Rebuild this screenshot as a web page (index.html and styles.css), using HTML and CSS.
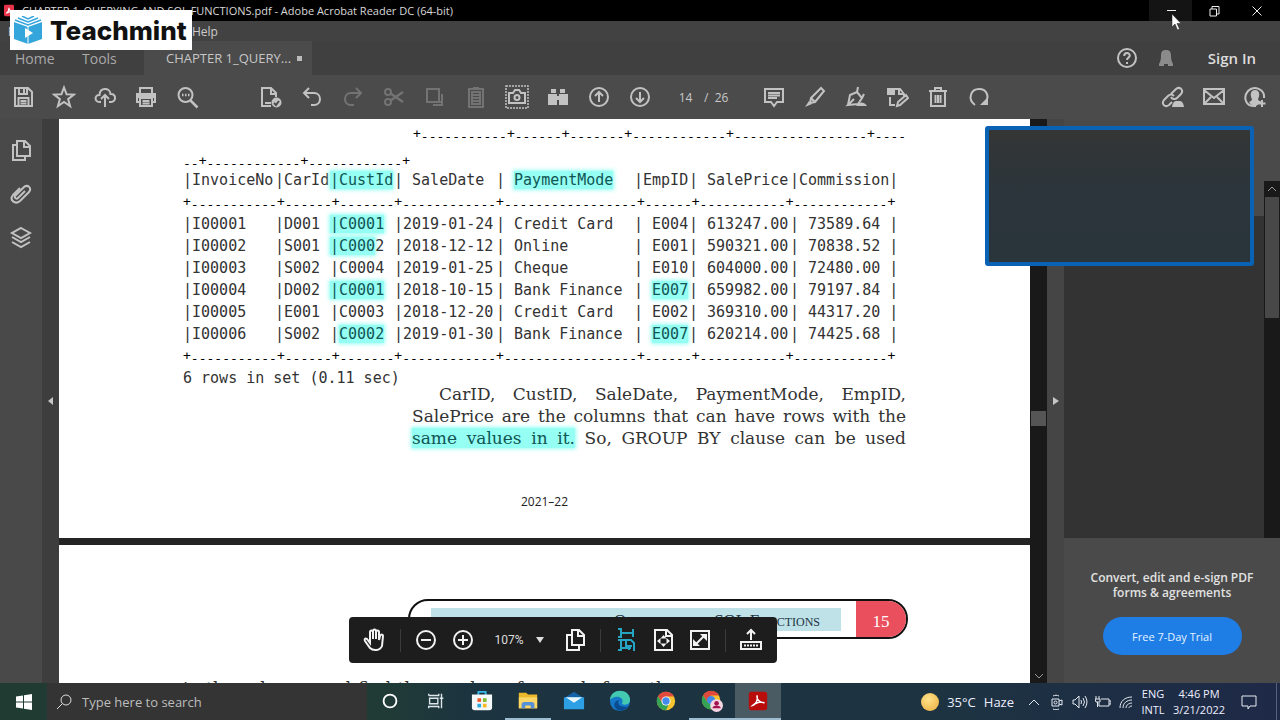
FILE: index.html
```html
<!DOCTYPE html>
<html lang="en">
<head>
<meta charset="utf-8">
<title>CHAPTER 1_QUERYING AND SQL FUNCTIONS.pdf - Adobe Acrobat Reader DC (64-bit)</title>
<link rel="stylesheet" href="styles.css">
</head>
<body>
<div class="screen">
  <header class="titlebar">
    <svg class="app-icon" viewBox="0 0 14 16"><rect width="14" height="16" rx="2" fill="#e8344a"/><path d="M3 12c3-2 4-5 4-8 0 3 2 5 5 6-3-1-6 0-9 2" fill="none" stroke="#fff" stroke-width="1.5"/></svg>
    <span class="title">CHAPTER 1_QUERYING AND SQL FUNCTIONS.pdf - Adobe Acrobat Reader DC (64-bit)</span>
    <div class="window-buttons">
      <button class="win active" aria-label="Minimize"><svg viewBox="0 0 12 12"><path d="M2 5.500h9"/></svg></button>
      <button class="win" aria-label="Restore"><svg viewBox="0 0 12 12"><path d="M2 4h6.500v7H2zM4 4V1.500h7V9H8.500"/></svg></button>
      <button class="win" aria-label="Close"><svg viewBox="0 0 12 12"><path d="M1.500 1.500l9 9M10.500 1.500l-9 9"/></svg></button>
    </div>
  </header>
  <nav class="menubar"><a href="#">File</a><a href="#">Help</a></nav>
  <nav class="tabs">
    <a href="#" class="tab home">Home</a>
    <a href="#" class="tab tools">Tools</a>
    <a href="#" class="tab doc">CHAPTER 1_QUERY...<i class="dot"></i></a>
    <div class="account">
      <button class="icon" aria-label="Help"><svg viewBox="0 0 24 24"><circle cx="12" cy="12" r="9"/><path d="M9.200 10c0-4 5.600-3.600 5.600-.5 0 2-2.800 2-2.800 4.500M12 16v2"/></svg></button>
      <button class="icon dim" aria-label="Notifications"><svg viewBox="0 0 24 24"><path class="solid" d="M12 4c-4 0-5 2-5 6 0 4-1 6-2 8h14c-1-2-2-4-2-8 0-4-1-6-5-6zM5 18h5v2H5zM14 18h5v2h-5z"/></svg></button>
      <button class="signin">Sign In</button>
    </div>
  </nav>
  <div class="toolbar">
    <div class="group">
      <button class="icon" aria-label="Save"><svg viewBox="0 0 24 24"><path d="M4 3h13l4 4v14H4zM8 3v6h8V3M13 4v4M7.500 21v-8h10v8M9.500 16h6M9.500 18.500h6"/></svg></button>
      <button class="icon" aria-label="Star"><svg viewBox="0 0 24 24"><path d="M12 2.500l2.600 6.800 7.200.3-5.700 4.500 2 7L12 17l-6.100 4.100 2-7L2.200 9.600l7.200-.3z"/></svg></button>
      <button class="icon" aria-label="Upload"><svg viewBox="0 0 24 24"><path d="M8 17H6.500C1 17 1.500 9.500 6.500 10 7 2 17 2.500 17.500 9c6-.5 6 8 .5 8h-2M12 22V10M8 14l4-4 4 4"/></svg></button>
      <button class="icon" aria-label="Print"><svg viewBox="0 0 24 24"><path d="M6 8V3h12v5M6 17H3V9h18v8h-3M6 13h12v8H6zM8.500 16h7M8.500 18.500h7"/><path class="solid" d="M3 8h18v5H3z"/></svg></button>
      <button class="icon" aria-label="Find"><svg viewBox="0 0 24 24"><circle cx="10.500" cy="10" r="7"/><path d="M15.500 15.500l7 7M7 10h1.500M10 10h1.500M13 10h1.500" stroke-width="2.500"/></svg></button>
    </div>
    <div class="group second">
      <button class="icon" aria-label="Document"><svg viewBox="0 0 24 24"><path d="M12 21H3V3h9l5 5v4M12 3v6h5M6 18h6"/><circle class="solid" cx="17.500" cy="17.500" r="5"/><path d="M15 18l2 2 3-4" stroke="#4b4b4b"/></svg></button>
      <button class="icon" aria-label="Undo"><svg viewBox="0 0 24 24"><path d="M5 8h9c8 0 8 12 0 12h-3M9 3L4 8l5 5"/></svg></button>
      <button class="icon faint" aria-label="Redo"><svg viewBox="0 0 24 24"><path d="M19 8h-9c-8 0-8 12 0 12h3M15 3l5 5-5 5"/></svg></button>
      <button class="icon faint" aria-label="Cut"><svg viewBox="0 0 24 24"><circle cx="6" cy="7" r="3"/><circle cx="6" cy="17" r="3"/><path d="M8.500 8.500L21 17M8.500 15.500L21 7" stroke-width="2.500"/></svg></button>
      <button class="icon faint" aria-label="Copy"><svg viewBox="0 0 24 24"><path d="M4 4h12v13H4zM19 9v11h-9M13 17h5"/></svg></button>
      <button class="icon faint" aria-label="Paste"><svg viewBox="0 0 24 24"><path d="M5 4h14v18H5zM8 7h8v12H8zM9 10h6M9 13h6M9 16h6M9 3h6"/></svg></button>
      <button class="icon" aria-label="Snapshot"><svg viewBox="0 0 24 24"><path d="M1 1h22v22H1z" stroke-dasharray="2 1" stroke-width="1.500"/><path d="M4 18V8h4l2-3h4l2 3h4v10z"/><circle cx="12" cy="12.500" r="2.500"/></svg></button>
      <button class="icon" aria-label="Search"><svg viewBox="0 0 24 24"><path class="solid" d="M2 9h9v11H2zM13 9h9v11h-9zM5 4h5v4H5zM14 4h5v4h-5zM11 11h2v4h-2z"/></svg></button>
      <button class="icon" aria-label="Previous page"><svg viewBox="0 0 24 24"><circle cx="12" cy="12" r="9"/><path d="M12 17V7M8 11l4-4 4 4"/></svg></button>
      <button class="icon" aria-label="Next page"><svg viewBox="0 0 24 24"><circle cx="12" cy="12" r="9"/><path d="M12 7v10M8 13l4 4 4-4"/></svg></button>
    </div>
    <div class="pages"><input type="text" value="14" aria-label="Page number"><span>/&nbsp; 26</span></div>
    <div class="group">
      <button class="icon" aria-label="Comment"><svg viewBox="0 0 24 24"><path d="M3 4h18v13h-6l-3 4-3-4H3zM6 8h12M6 10.500h12M6 13h9"/></svg></button>
      <button class="icon" aria-label="Highlight"><svg viewBox="0 0 24 24"><path d="M18 3l3 3-9 11-5 1 1-5zM8 13l4 4"/><path class="solid" d="M6 16l3 3-7 3z"/></svg></button>
      <button class="icon" aria-label="Sign"><svg viewBox="0 0 24 24"><path d="M4 20l2-10 7-3 5 6-4 6-10 1 6-6M13 7l1-5M18 13l2-4"/><path class="solid" d="M12 21c3-4 7-5 11 0z"/></svg></button>
      <button class="icon" aria-label="Edit"><svg viewBox="0 0 24 24"><path d="M10 4h5l4 5v2M5 12v8h5M14 4v5h5M12 21l1-4 8-7 2 3-8 7z"/><path class="solid" d="M2 3h8v7H2z"/></svg></button>
      <button class="icon" aria-label="Delete"><svg viewBox="0 0 24 24"><path d="M3 6h18M9 6V3h6v3M5 6v15h14V6M9.500 10v8M12 10v8M14.500 10v8"/></svg></button>
      <button class="icon" aria-label="Rotate"><svg viewBox="0 0 24 24"><path d="M8 20C0 14 4 4 12 4c8 0 11 8 6 14"/><path class="solid" d="M21 12v8h-8z"/></svg></button>
    </div>
    <div class="group share">
      <button class="icon" aria-label="Share link"><svg viewBox="0 0 24 24"><path d="M10 9l5-5c4-3 8 1 5 5l-4 4c-2 2-5 1-6-1M13 11c-2-2-4-2-6 0l-4 4c-3 4 1 8 5 5l3-3"/><path class="solid" d="M11 22c1-6 3-6 6-6s5 0 6 6z"/></svg></button>
      <button class="icon" aria-label="Mail"><svg viewBox="0 0 24 24"><path d="M2 4h20v15H2zM2 5l10 8L22 5M3 18l6-6M21 18l-6-6"/></svg></button>
      <button class="icon" aria-label="Add people"><svg viewBox="0 0 24 24"><path d="M13 21C2 22 0 12 5 6c6-6 17-2 16 7"/><path class="solid" d="M12 5c5 0 5 6 3 9 0 2 3 2 4 3l-6 4c-4 0-6-2-7-4 1-1 3-1 3-3-2-3-2-9 3-9zM18 15h2v2.500h2.500v2H20V22h-2v-2.500h-2.500v-2H18z"/></svg></button>
    </div>
  </div>

  <main class="workspace">
    <aside class="rail">
      <button class="icon" aria-label="Page thumbnails"><svg viewBox="0 0 24 24"><path d="M8 3h8l5 5v10H8zM15 3v6h6M8 7H4v15h12v-4"/></svg></button>
      <button class="icon" aria-label="Attachments"><svg viewBox="0 0 24 24"><path d="M16 9l-7 7c-2 2-4-1-3-2l9-9c4-3 8 1 5 5l-9 9c-5 4-11-1-7-6l7-7"/></svg></button>
      <button class="icon" aria-label="Layers"><svg viewBox="0 0 24 24"><path d="M12 2l9 5-9 5-9-5zM3 11l9 5 9-5M3 16l9 5 9-5"/></svg></button>
    </aside>
    <button class="splitter" aria-label="Show navigation pane"><svg viewBox="0 0 6 8"><path d="M5 0v8L0 4z"/></svg></button>

    <div class="document">
      <article class="page first">
        <div class="dashes top">+<s>-----------</s>+<s>------</s>+<s>-------</s>+<s>------------</s>+<s>-----------------</s>+<s>----</s></div>
        <div class="dashes wrap"><s>--</s>+<s>------------</s>+<s>------------</s>+</div>
        <table class="result">
          <colgroup><col class="c-inv"><col class="c-car"><col class="c-cust"><col class="c-date"><col class="c-pay"><col class="c-emp"><col class="c-price"><col class="c-com"></colgroup>
          <thead>
            <tr><th>|InvoiceNo</th><th>|CarId</th><th><mark>|CustId</mark></th><th>| SaleDate</th><th>| <mark>PaymentMode</mark></th><th>|EmpID</th><th>| SalePrice</th><th>|Commission|</th></tr>
            <tr><td colspan="8" class="dashes">+<s>-----------</s>+<s>------</s>+<s>-------</s>+<s>------------</s>+<s>-----------------</s>+<s>------</s>+<s>-----------</s>+<s>------------</s>+</td></tr>
          </thead>
          <tbody>
            <tr><td>|I00001</td><td>|D001</td><td><mark>|C0001</mark></td><td>|2019-01-24</td><td>| Credit Card</td><td>| E004</td><td>| 613247.00</td><td>| 73589.64 |</td></tr>
            <tr><td>|I00002</td><td>|S001</td><td><mark>|C000</mark>2</td><td>|2018-12-12</td><td>| Online</td><td>| E001</td><td>| 590321.00</td><td>| 70838.52 |</td></tr>
            <tr><td>|I00003</td><td>|S002</td><td>|C0004</td><td>|2019-01-25</td><td>| Cheque</td><td>| E010</td><td>| 604000.00</td><td>| 72480.00 |</td></tr>
            <tr><td>|I00004</td><td>|D002</td><td><mark>|C0001</mark></td><td>|2018-10-15</td><td>| Bank Finance</td><td>| <mark>E007</mark></td><td>| 659982.00</td><td>| 79197.84 |</td></tr>
            <tr><td>|I00005</td><td>|E001</td><td>|C0003</td><td>|2018-12-20</td><td>| Credit Card</td><td>| E002</td><td>| 369310.00</td><td>| 44317.20 |</td></tr>
            <tr><td>|I00006</td><td>|S002</td><td>|<mark>C0002</mark></td><td>|2019-01-30</td><td>| Bank Finance</td><td>| <mark>E007</mark></td><td>| 620214.00</td><td>| 74425.68 |</td></tr>
            <tr><td colspan="8" class="dashes">+<s>-----------</s>+<s>------</s>+<s>-------</s>+<s>------------</s>+<s>-----------------</s>+<s>------</s>+<s>-----------</s>+<s>------------</s>+</td></tr>
          </tbody>
        </table>
        <div class="after">
          <div class="count">6 rows in set (0.11 sec)</div>
          <div class="prose">
            <div class="line indent">CarID, CustID, SaleDate, PaymentMode, EmpID,</div>
            <div class="line">SalePrice are the columns that can have rows with the</div>
            <div class="line"><mark>same values in it.</mark> So, GROUP BY clause can be used</div>
          </div>
        </div>
        <footer class="edition">2021–22</footer>
      </article>
      <article class="page second-page">
        <div class="chapter"><span class="chapter-title">Querying and SQL Functions</span><span class="chapter-page">15</span></div>
        <div class="line next">in the columns and find the number of records from the</div>
      </article>
      <div class="float-bar">
        <button class="icon" aria-label="Pan"><svg viewBox="0 0 24 24"><path d="M7 15L4 11c-2-1-3 0-2 2l5 7c3 3 10 3 12-2l1-10c0-2-2-2-3 0l-1 4V4c0-2-3-2-3 0v7-8c0-2-3-2-3 0v8-7c0-2-3-2-3 0z"/></svg></button>
        <i class="sep"></i>
        <button class="icon" aria-label="Zoom out"><svg viewBox="0 0 24 24"><circle cx="12" cy="12" r="9"/><path d="M7 12h10"/></svg></button>
        <button class="icon" aria-label="Zoom in"><svg viewBox="0 0 24 24"><circle cx="12" cy="12" r="9"/><path d="M7 12h10M12 7v10"/></svg></button>
        <button class="zoom">107% <svg viewBox="0 0 8 6"><path d="M0 0h8L4 6z"/></svg></button>
        <button class="icon" aria-label="Page display"><svg viewBox="0 0 24 24"><path d="M9 2h7l5 5v10H9zM15 2v6h6M8 7H4v15h12v-4"/></svg></button>
        <i class="sep"></i>
        <button class="icon blue" aria-label="Fit width"><svg viewBox="0 0 24 24"><path d="M4 1h3v8H4M7 5h12M19 1v8M4 12h13l3 3v8M7 12v11M4 22h3M12 13v5h6M8 20h9M15 18v4"/></svg></button>
        <button class="icon" aria-label="Fit page"><svg viewBox="0 0 24 24"><path d="M4 2h12l5 5v15H4zM15 2v6h6"/><path class="solid" d="M12.500 7l3 3.500h-6zM12.500 19l3-3.500h-6zM6 13l3.500-3v6zM19 13l-3.500-3v6z"/></svg></button>
        <button class="icon" aria-label="Full screen"><svg viewBox="0 0 24 24"><path d="M3 3h18v18H3zM8 16l8-8"/><path class="solid" d="M12 6h7v7zM5 11v7h7z"/></svg></button>
        <i class="sep"></i>
        <button class="icon" aria-label="Show toolbar"><svg viewBox="0 0 24 24"><path d="M12 12V2M8 6l4-4 4 4M2 14h20v7H2z"/><path d="M5 17.500h14" stroke-dasharray="2 1"/></svg></button>
      </div>
    </div>
    <div class="vscroll doc-scroll"><i class="thumb"></i><svg viewBox="0 0 10 6"><path d="M1 1l4 4 4-4"/></svg></div>
    <button class="splitter right" aria-label="Hide tools pane"><svg viewBox="0 0 6 8"><path d="M0 0v8l6-4z"/></svg></button>
    <aside class="tools-pane">
      <div class="pane-top"></div>
      <div class="pane-list"></div>
      <div class="vscroll pane-scroll"><svg viewBox="0 0 10 6"><path d="M1 5l4-4 4 4"/></svg><i class="thumb"></i></div>
      <div class="promo">
        <p>Convert, edit and e-sign PDF forms &amp; agreements</p>
        <button>Free 7-Day Trial</button>
      </div>
    </aside>
  </main>

  <footer class="taskbar">
    <button class="start" aria-label="Start"><svg viewBox="0 0 16 16"><path d="M0 2.500L7 1.500v6H0zM8 1.300L16 0v7.500H8zM0 8.500h7v6L0 13.500zM8 8.500h8V16l-8-1.300z"/></svg></button>
    <label class="search"><svg viewBox="0 0 16 16"><circle cx="10" cy="6" r="5"/><path d="M6.500 9.500L1 15"/></svg><input type="text" placeholder="Type here to search" aria-label="Search"></label>
    <div class="apps">
      <button aria-label="Cortana"><svg viewBox="0 0 24 24"><circle cx="12" cy="12" r="7" fill="none" stroke="#fff" stroke-width="2"/></svg></button>
      <button aria-label="Task view"><svg viewBox="0 0 24 24"><path d="M4 6V4M4 6h11V4M4 20v-2h11v2M5 9h9v6H5zM18 4v16M16 9h4" fill="none" stroke="#dde6ea" stroke-width="1.500"/></svg></button>
      <button aria-label="Store"><svg viewBox="0 0 24 24"><path d="M8 6V2h8v4" fill="none" stroke="#35b6e8" stroke-width="2"/><path d="M1 5h22v14q0 3-3 3H4q-3 0-3-3z" fill="#f5f8f8"/><path d="M7 9h4v4H7z" fill="#f05a28"/><path d="M13 9h4v4h-4z" fill="#7cba30"/><path d="M7 15h4v4H7z" fill="#28a8e0"/><path d="M13 15h4v4h-4z" fill="#f8b820"/></svg></button>
      <button class="open" aria-label="File Explorer"><svg viewBox="0 0 24 24"><path d="M2 3h8l2 2h10v15H2z" fill="#edb92c"/><path d="M2 8h20v12H2z" fill="#fbd768"/><path d="M5 20v-4q0-3 3-3h8q3 0 3 3v4h-4v-3H9v3z" fill="#5591d8"/></svg></button>
      <button aria-label="Mail"><svg viewBox="0 0 24 24"><path d="M1 9l11-7 11 7z" fill="#1463a8"/><path d="M1 8h22v13H1z" fill="#2d9fe4"/><path d="M3 8h18l-9 6z" fill="#e8f6fc"/></svg></button>
      <button aria-label="Edge"><svg viewBox="0 0 24 24"><circle cx="12" cy="12" r="11" fill="#1678c9"/><path d="M1 11C2-3 23-2 23 11c0 5-6 6-9 4 4-7-7-11-13-4z" fill="#42c9b0"/><path d="M12 11c-4 2-2 9 9 7-4 6-13 6-15 0-1-4 2-7 6-7z" fill="#0b4c91"/></svg></button>
      <button aria-label="Chrome"><svg viewBox="0 0 24 24"><circle cx="12" cy="12" r="10" fill="#f6c52e"/><path d="M3.300 7A10 10 0 0 1 20.700 7H12l-4 7z" fill="#df4a3c"/><path d="M3.300 7A10 10 0 0 0 12 22l4-8H8z" fill="#35a355"/><circle cx="12" cy="12" r="5" fill="#fff"/><circle cx="12" cy="12" r="4" fill="#438bea"/></svg></button>
      <button class="open" aria-label="Chrome profile"><svg viewBox="0 0 24 24"><circle cx="11" cy="11" r="10" fill="#f6c52e"/><path d="M2.300 6A10 10 0 0 1 19.700 6H11l-4 7z" fill="#df4a3c"/><path d="M2.300 6A10 10 0 0 0 11 21l4-8H7z" fill="#35a355"/><circle cx="11" cy="11" r="4.500" fill="#438bea"/><circle cx="17" cy="17" r="7" fill="#f5d5e2"/><circle cx="17" cy="14.500" r="2.500" fill="#a11450"/><path d="M12.500 20c0-4 9-4 9 0z" fill="#a11450"/></svg></button>
      <button class="open current" aria-label="Adobe Acrobat"><svg viewBox="0 0 24 24"><rect x="2" y="2" width="20" height="20" rx="3" fill="#b90d0b"/><path d="M6 17c4-1 6-7 5-11-1 4 3 8 8 8-4-2-10 0-13 3z" fill="none" stroke="#fff" stroke-width="1.500"/></svg></button>
    </div>
    <div class="tray">
      <button class="weather"><i class="sun"></i><span>35°C</span><span>Haze</span></button>
      <button class="tray-icon" aria-label="Show hidden icons"><svg viewBox="0 0 16 16"><path d="M3 11l5-5 5 5"/></svg></button>
      <button class="tray-icon" aria-label="Meet now"><svg viewBox="0 0 16 16"><path d="M3 5h7v7H3zM10 7l3-1v5l-3-1M4 2c2-1 4-1 6 0M4 15c2 1 4 1 6 0"/><circle cx="6.500" cy="8.500" r="1.500"/></svg></button>
      <button class="tray-icon" aria-label="Volume"><svg viewBox="0 0 16 16"><path d="M1 6h2l4-4v12l-4-4H1zM9 6q1 2 0 4M11 4q3 4 0 8M13 2q4 6 0 12"/></svg></button>
      <button class="tray-icon" aria-label="Battery"><svg viewBox="0 0 16 16"><path d="M6 5h8v7H4V9M14 7h2v3h-2M1 2v3M4 2v3M0 5h5v3H1zM2.500 8v5"/></svg></button>
      <button class="tray-icon" aria-label="Wi-Fi"><svg viewBox="0 0 16 16"><path d="M2 14C2 7 7 3 14 3M5 14c0-5 4-8 9-8M8 14c0-3 3-5 6-5M11 14c0-1 1-2 3-2"/></svg></button>
      <button class="stack lang"><span>ENG</span><span>INTL</span></button>
      <button class="stack clock"><span>4:46 PM</span><span>3/21/2022</span></button>
      <button class="tray-icon note" aria-label="Action center"><svg viewBox="0 0 16 16"><path d="M1 2h14v10H9l-2 3v-3H1z"/></svg></button>
      <i class="peek"></i>
    </div>
  </footer>

  <div class="brand">
    <svg viewBox="0 0 28 28"><path d="M0 6l14 5 14-5v17l-14 5L0 23z" fill="#35a6dc"/><path d="M1 4l13 5 13-5M4 2l10 4 10-4M8 0l6 3 6-3" fill="none" stroke="#35a6dc" stroke-width="1.500"/><path d="M14 10v18" stroke="#fff" stroke-width="1"/><path d="M11 12l8 5-8 5z" fill="#fff"/></svg>
    <strong>Teachmint</strong>
  </div>
  <div class="camera"></div>
  <svg class="cursor" viewBox="0 0 10 18"><path d="M1 1v13l3-3 2.500 6 2-1L6 10.500h4z" fill="#fff" stroke="#222" stroke-width=".5"/></svg>
</div>
</body>
</html>
```
FILE: styles.css
```css
* { box-sizing: border-box; }
body { margin: 0; background: #222; font-family: "Open Sans", "Noto Sans", sans-serif; color: #ddd; }
button { border: 0; padding: 0; background: none; color: inherit; font: inherit; }
a { color: inherit; text-decoration: none; }
svg { display: block; }
.screen { position: relative; height: 100vh; display: flex; flex-direction: column; overflow: hidden; background: #404040; }

.titlebar { flex: none; height: 21px; background: #000; display: flex; align-items: center; padding: 0 2px 0 4px; color: #d8d8d8; }
.app-icon { width: 10px; height: 13px; }
.title { margin-left: 8px; white-space: nowrap; font-size: 11px; }
.window-buttons { margin-left: auto; display: flex; align-self: stretch; }
.win { width: 43px; display: grid; place-items: center; }
.win.active { background: #141414; }
.win svg { width: 12px; height: 12px; fill: none; stroke: #eee; stroke-width: 1; }

.menubar { flex: none; height: 20px; display: flex; align-items: center; gap: 165px; padding-left: 8px; font-size: 12px; color: #ccc; background: #424242; }
.tabs { flex: none; height: 34px; display: flex; align-items: stretch; font-size: 14px; color: #a9a9a9; background: #404040; }
.tab { display: flex; align-items: center; }
.home { padding-left: 15px; width: 82px; }
.tools { width: 62px; }
.doc { width: 168px; padding-left: 22px; background: #4b4b4b; color: #c6c6c6; font-size: 13px; gap: 6px; white-space: nowrap; }
.dot { width: 5px; height: 5px; background: #bbb; }
.account { margin-left: auto; display: flex; align-items: center; gap: 15px; padding-right: 24px; }
.signin { font-weight: 600; font-size: 15px; color: #ddd; margin-left: 15px; }

.icon { width: 24px; height: 24px; flex: none; color: #c2c2c2; }
.icon svg { width: 24px; height: 24px; fill: none; stroke: currentColor; stroke-width: 2; }
.icon .solid { fill: currentColor; stroke: none; }
.dim { color: #8b8b8b; }
.faint { color: #737373; }

.toolbar { flex: none; height: 44px; display: flex; align-items: center; padding: 0 13px 0 11px; background: #4b4b4b; }
.group { display: flex; gap: 17px; }
.second { margin-left: 60px; }
.share { margin-left: auto; }
.pages { width: 110px; display: flex; align-items: center; gap: 8px; padding-left: 23px; font-size: 12px; color: #c9c9c9; }
.pages input { width: 21px; padding: 0; border: 0; background: none; color: inherit; font: inherit; text-align: center; }
.pages span { white-space: nowrap; }

.workspace { flex: 1; min-height: 0; display: flex; }
.rail { width: 42px; flex: none; background: #494949; display: flex; flex-direction: column; align-items: center; gap: 20px; padding-top: 19px; }
.splitter { width: 17px; flex: none; background: #3d3d3d; display: grid; place-items: center; }
.splitter svg { width: 6px; height: 8px; fill: #c6c6c6; }
.splitter.right { background: #454545; }

.document { flex: 1; min-width: 0; position: relative; overflow: hidden; background: #242424; color: #333; }
.page { background: #fff; padding-left: 124px; }
.first { height: 419px; }
.second-page { margin-top: 7px; height: 420px; padding-top: 54px; }
.dashes { font: 13px/22px "DejaVu Sans Mono", monospace; color: #000; white-space: pre; }
.dashes s { text-decoration: none; vertical-align: -3px; line-height: 0; }
.dashes.top { line-height: 30px; padding: 0 0 3px 230px; }
.dashes.wrap { line-height: 17px; }
.result { border-collapse: collapse; table-layout: fixed; width: 719px; font: 15px/22px "DejaVu Sans Mono", monospace; }
.result th, .result td { padding: 0; font-weight: 400; text-align: left; white-space: pre; height: 22px; }
.result .dashes { font-size: 13px; }
.c-inv { width: 92px; }
.c-car, .c-emp { width: 55px; }
.c-cust { width: 64px; }
.c-date { width: 102px; }
.c-pay { width: 138px; }
.c-price { width: 101px; }
.c-com { width: 112px; }
mark { color: #155; background: #94fff2; box-shadow: 0 0 4px 1px #94fff2; }
.after { display: grid; grid-template-columns: 229px 494px; }
.count { font: 15px/22px "DejaVu Sans Mono", monospace; white-space: nowrap; }
.prose { padding-top: 16px; }
.line { font: 17px/22px "DejaVu Serif", serif; text-align: justify; text-align-last: justify; white-space: nowrap; }
.indent { padding-left: 27px; }
.edition { margin-left: -124px; padding-top: 43px; text-align: center; font: 12px/20px "Open Sans", sans-serif; color: #222; }
.chapter { width: 500px; height: 40px; margin-left: 225px; border: 2px solid #111; border-radius: 20px; overflow: hidden; display: flex; }
.chapter-title { width: 410px; height: 23px; margin: 7px 15px 0 21px; padding-right: 21px; background: #bee2e7; text-align: right; font: 17px/25px "Liberation Serif", serif; font-variant: small-caps; color: #234; }
.chapter-page { flex: 1; background: #e94f5c; color: #fff; font: 17px/42px "Liberation Serif", serif; text-align: center; }
.next { width: 494px; margin-top: 38px; }

.float-bar { position: absolute; left: 290px; bottom: 20px; width: 428px; height: 46px; border-radius: 4px; background: #1d1d1d; display: flex; align-items: center; gap: 13px; padding: 0 14px; }
.float-bar .icon { color: #f2f2f2; }
.float-bar .blue { color: #25a4c4; }
.sep { width: 1px; height: 23px; background: #3b3b3b; flex: none; }
.zoom { flex: 1; display: flex; align-items: center; justify-content: center; gap: 12px; font: 12px "Roboto", sans-serif; color: #ddd; }
.zoom svg { width: 8px; height: 6px; fill: #ddd; }

.vscroll { background: #191919; display: flex; flex-direction: column; align-items: center; }
.vscroll svg { width: 10px; height: 6px; fill: none; stroke: #999; stroke-width: 1; }
.doc-scroll { width: 17px; flex: none; padding: 292px 0 4px; justify-content: space-between; }
.doc-scroll .thumb { width: 15px; height: 15px; background: #555; }
.tools-pane { width: 216px; flex: none; display: grid; grid-template: 62px 35px 1fr 145px / 1fr 16px; background: #4a4a4a; }
.pane-top { grid-column: 1 / 3; }
.pane-list { grid-area: 3 / 1; background: #333; }
.pane-scroll { grid-area: 2 / 2 / 4 / 3; }
.pane-scroll svg { margin: 5px 0; }
.pane-scroll .thumb { width: 14px; height: 121px; background: #484848; }
.promo { grid-area: 4 / 1 / 5 / 3; text-align: center; padding: 32px 20px 0; }
.promo p { margin: 0 0 17px; font-weight: 600; line-height: 15px; font-size: 12px; color: #e2e2e2; }
.promo button { width: 139px; height: 38px; border-radius: 19px; background: #1f7de6; color: #e5f3ff; font-size: 11px; }

.taskbar { flex: none; height: 37px; display: flex; background: linear-gradient(90deg, #203b32 0, #203b36 390px, #1c3340 470px, #1d3342 75%, #1e2947 100%); }
.start { width: 47px; display: grid; place-items: center; }
.start svg { width: 16px; height: 16px; fill: #fff; }
.search { width: 320px; display: flex; align-items: center; gap: 10px; padding-left: 9px; background: #343434; }
.search svg { width: 16px; height: 16px; fill: none; stroke: #ddd; stroke-width: 1; }
.search input { flex: 1; min-width: 0; border: 0; padding: 0; background: none; color: #ccc; font: 13px "Open Sans", sans-serif; }
.search input::placeholder { color: #bdbdbd; opacity: 1; }
.apps { display: flex; }
.apps button { width: 46px; display: grid; place-items: center; border-bottom: 2px solid transparent; }
.apps svg { width: 22px; height: 22px; }
.apps .open { border-bottom-color: #9fbdd0; }
.apps .current { background: #4b5b64; }
.tray { margin-left: auto; display: flex; align-items: center; color: #eef; font-size: 13px; }
.weather { display: flex; align-items: center; gap: 8px; margin-right: 8px; }
.sun { width: 18px; height: 18px; border-radius: 50%; background: radial-gradient(circle at 40% 35%, #ffe28a, #e8ac3c); }
.tray-icon { width: 23px; display: grid; place-items: center; }
.tray-icon svg { width: 16px; height: 16px; fill: none; stroke: #e6eaf2; stroke-width: 1; }
.stack { display: flex; flex-direction: column; line-height: 16px; font-size: 11px; text-align: center; }
.lang { width: 32px; }
.clock { width: 60px; }
.note { width: 40px; margin-right: 7px; }
.peek { width: 1px; height: 37px; background: #56607a; margin-right: 3px; }

.brand { position: absolute; left: 10px; top: 10px; width: 182px; height: 40px; padding-left: 4px; background: #fff; color: #111; display: flex; align-items: center; gap: 8px; }
.brand svg { width: 28px; height: 28px; }
.brand strong { font: 800 26px "Inter", sans-serif; }
.camera { position: absolute; right: 26px; top: 126px; width: 269px; height: 140px; border: 4px solid #0a62b4; border-radius: 3px; background: linear-gradient(#353635, #2c353a 40%, #29343b); }
.cursor { position: absolute; right: 99px; top: 13px; width: 10px; height: 18px; }
```
